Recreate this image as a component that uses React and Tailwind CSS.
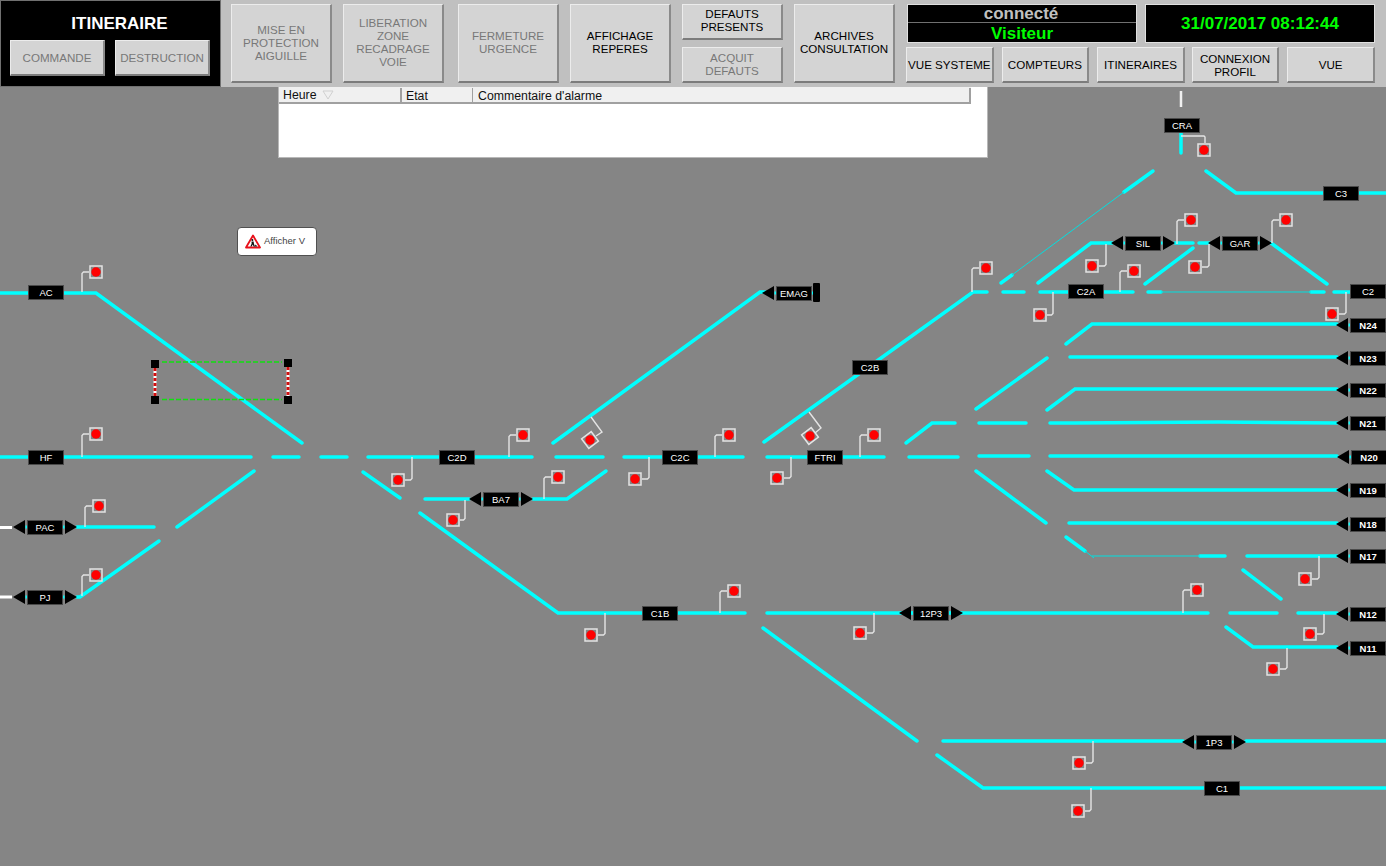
import React from 'react';

const font = { fontFamily: '"Liberation Sans", Arial, sans-serif' };

// track segments in page coordinates
const tracks = [
  '0,293 96,293 302,443',
  '0,457 251,457',
  '273,457 299,457',
  '321,457 347,457',
  '368,457 532,457',
  '556,457 603,457',
  '624,457 743,457',
  '767,457 884,457',
  '909,457 958,457',
  '979,456 1029,456',
  '1050,456 1337,456',
  '177,527 254,471',
  '77,527 154,527',
  '77,597 80,597 159,541',
  '363,472 400,498',
  '420,513 558,613 745,613',
  '767,613 1208,613',
  '1230,613 1277,613',
  '1298,613 1337,613',
  '425,499 469,499',
  '533,499 567,499 606,471',
  '553,443 760,292 765,292',
  '764,442 973,292 987,292',
  '1003,292 1024,292',
  '1040,292 1133,292',
  '1148,292 1161,292',
  '1311,292 1324,292',
  '1334,292 1350,292',
  '1001,283 1012,275',
  '1124,192 1153,171',
  '1206,171 1236,193 1386,193',
  '1181,132 1181,153',
  '1038,283 1091,243 1112,243',
  '1175,243 1193,243',
  '1199,243 1209,243',
  '1271,243 1327,284',
  '1145,284 1193,248',
  '1066,344 1092,324 1337,324',
  '1070,357 1337,357',
  '976,409 1047,358',
  '1047,410 1075,389 1337,389',
  '979,423 1026,423',
  '1050,423 1074,423 1219,422 1337,423',
  '906,443 932,423 955,423',
  '1047,471 1074,490 1337,490',
  '976,471 1046,523',
  '1069,523 1337,523',
  '1066,537 1085,551',
  '1200,556 1225,556',
  '1247,556 1337,556',
  '1243,570 1281,599',
  '1226,627 1253,647 1337,647',
  '763,628 917,741',
  '943,741 1183,741',
  '1246,741 1386,741',
  '937,755 983,788 1386,788',
];

const thinTracks = [
  '1012,275 1124,192',
  '1161,292 1311,292',
  '1085,551 1094,558',
  '1092,556 1200,556',
];

// square centre, stem x, y where the stem meets the track
const alarms = [
  [96, 272, 82, 292],
  [96, 434, 82, 457],
  [99, 506, 85, 527],
  [96, 575, 82, 596],
  [398, 480, 412, 457],
  [523, 435, 509, 457],
  [453, 520, 465, 500],
  [558, 477, 544, 499],
  [635, 479, 649, 457],
  [729, 435, 715, 457],
  [777, 478, 791, 457],
  [874, 435, 860, 457],
  [986, 268, 972, 292],
  [1040, 315, 1053, 292],
  [1134, 271, 1120, 292],
  [1092, 266, 1106, 244],
  [1191, 220, 1177, 244],
  [1195, 267, 1209, 244],
  [1286, 220, 1272, 243],
  [1332, 314, 1346, 292],
  [1305, 579, 1319, 556],
  [1197, 590, 1183, 613],
  [1310, 634, 1324, 614],
  [1273, 669, 1287, 648],
  [591, 635, 605, 613],
  [734, 591, 720, 613],
  [860, 633, 874, 613],
  [1079, 763, 1093, 741],
  [1078, 811, 1091, 788],
];

// x is the left edge of the black body, y its centre
const labels = [
  { name: 'AC', x: 28, y: 292 },
  { name: 'HF', x: 28, y: 457 },
  { name: 'PAC', x: 27, y: 527, left: true, right: true },
  { name: 'PJ', x: 27, y: 597, left: true, right: true },
  { name: 'C2D', x: 439, y: 457 },
  { name: 'BA7', x: 483, y: 499, left: true, right: true },
  { name: 'C2C', x: 662, y: 457 },
  { name: 'FTRI', x: 807, y: 457 },
  { name: 'C2B', x: 852, y: 367 },
  { name: 'EMAG', x: 776, y: 293, left: true },
  { name: 'C1B', x: 642, y: 613 },
  { name: '12P3', x: 913, y: 613, left: true, right: true },
  { name: '1P3', x: 1196, y: 742, left: true, right: true },
  { name: 'C1', x: 1204, y: 788 },
  { name: 'CRA', x: 1164, y: 125 },
  { name: 'C3', x: 1323, y: 193 },
  { name: 'C2A', x: 1068, y: 291 },
  { name: 'C2', x: 1350, y: 291 },
  { name: 'SIL', x: 1125, y: 243, left: true, right: true },
  { name: 'GAR', x: 1222, y: 243, left: true, right: true },
  { name: 'N24', x: 1350, y: 325, left: true, bold: true },
  { name: 'N23', x: 1350, y: 358, left: true, bold: true },
  { name: 'N22', x: 1350, y: 390, left: true, bold: true },
  { name: 'N21', x: 1350, y: 423, left: true, bold: true },
  { name: 'N20', x: 1351, y: 457, left: true, bold: true },
  { name: 'N19', x: 1350, y: 490, left: true, bold: true },
  { name: 'N18', x: 1350, y: 524, left: true, bold: true },
  { name: 'N17', x: 1350, y: 556, left: true, bold: true },
  { name: 'N12', x: 1350, y: 614, left: true, bold: true },
  { name: 'N11', x: 1350, y: 648, left: true, bold: true },
];

const AlarmSquare = ({ cx, cy }) => (
  <>
    <rect x={cx - 6} y={cy - 6} width="12" height="12" fill="#858585" stroke="#e4e4e4" strokeWidth="1.5" />
    <circle cx={cx} cy={cy} r="4.7" fill="#ff0000" />
  </>
);

const Alarm = ({ data }) => {
  const [cx, cy, sx, ty] = data;
  const edge = sx < cx ? cx - 7 : cx + 7;
  const corner = sx < cx ? sx + 1.5 : sx - 1.5;
  const bend = ty > cy ? cy + 1.5 : cy - 1.5;
  return (
    <>
      <path d={`M${sx} ${ty}V${bend}L${corner} ${cy}H${edge}`} fill="none" stroke="#e4e4e4" strokeWidth="1.4" />
      <AlarmSquare cx={cx} cy={cy} />
    </>
  );
};

const Diamond = ({ cx, cy, stem }) => (
  <>
    <polyline points={stem} fill="none" stroke="#e4e4e4" strokeWidth="1.4" />
    <g transform={`rotate(-37 ${cx} ${cy})`}>
      <AlarmSquare cx={cx} cy={cy} />
    </g>
  </>
);

const Arrows = ({ label }) => {
  const { x, y, left, right } = label;
  return (
    <>
      {left && <polygon points={`${x - 14},${y} ${x - 2},${y - 7} ${x - 2},${y + 7}`} fill="#000" />}
      {left && <rect x={x - 1.5} y={y - 1.5} width="1.5" height="3" fill="#00ffff" />}
      {right && <rect x={x + 36} y={y - 1.5} width="1.5" height="3" fill="#00ffff" />}
      {right && <polygon points={`${x + 50},${y} ${x + 38},${y - 7} ${x + 38},${y + 7}`} fill="#000" />}
    </>
  );
};

const TrackLabel = ({ label }) => (
  <div
    className={`absolute flex h-[15px] w-[36px] items-center justify-center border border-[#4a4a4a] bg-black text-[9.5px] leading-none text-white ${label.bold ? 'font-bold' : ''}`}
    style={{ left: label.x, top: label.y - 87 - 7 }}
  >
    {label.name}
  </div>
);

const PanelButton = ({ lines, active, className }) => (
  <div
    className={`flex flex-col items-center justify-center border-t border-l border-t-[#ececec] border-l-[#ececec] border-r-2 border-b-2 border-r-[#8a8a8a] border-b-[#7c7c7c] bg-[#d4d4d4] text-[11.6px] leading-[13px] ${active ? 'text-black' : 'text-[#787878]'} ${className}`}
  >
    {lines.map((line) => (
      <span key={line} className="whitespace-nowrap">{line}</span>
    ))}
  </div>
);

const WarningIcon = () => (
  <svg width="16" height="15" viewBox="0 0 16 15">
    <polygon points="8,1.5 15,13.5 1,13.5" fill="#fff" stroke="#e8101a" strokeWidth="1.8" strokeLinejoin="round" />
    <circle cx="7.4" cy="6" r="1" fill="#111" />
    <path d="M6.5 7.4L8.6 7.6L9 10L10 12.5H8.6L7.8 10.6L6.6 12.5H5.3L6.6 9.8Z" fill="#111" />
    <path d="M9.6 12.5L10.6 10.6L12.4 12.5Z" fill="#111" />
  </svg>
);

const Toolbar = () => (
  <div className="flex h-[87px] shrink-0 bg-[#c0c0c0]">
    <div className="flex h-[87px] w-[221px] shrink-0 flex-col border border-[#707070] bg-black">
      <div className="mt-[13px] h-[20px] pl-[18px] text-center text-[17px] font-bold leading-[20px] text-white">ITINERAIRE</div>
      <div className="mt-[6px] flex gap-[10px] pl-[9px]">
        <PanelButton lines={['COMMANDE']} className="h-[36px] w-[95px]" />
        <PanelButton lines={['DESTRUCTION']} className="h-[36px] w-[95px]" />
      </div>
    </div>
    <div className="flex items-start pt-[4px] pl-[10px]">
      <PanelButton lines={['MISE EN', 'PROTECTION', 'AIGUILLE']} className="h-[79px] w-[101px] pb-[2px]" />
      <PanelButton lines={['LIBERATION', 'ZONE', 'RECADRAGE', 'VOIE']} className="ml-[11px] h-[79px] w-[101px] pb-[2px]" />
      <PanelButton lines={['FERMETURE', 'URGENCE']} className="ml-[14px] h-[79px] w-[101px] pb-[2px]" />
      <PanelButton lines={['AFFICHAGE', 'REPERES']} active className="ml-[11px] h-[79px] w-[101px] pb-[2px]" />
      <div className="ml-[11px] flex w-[101px] flex-col gap-[7px]">
        <PanelButton lines={['DEFAUTS', 'PRESENTS']} active className="h-[36px] pb-[4px]" />
        <PanelButton lines={['ACQUIT', 'DEFAUTS']} className="h-[36px] pb-[2px]" />
      </div>
      <PanelButton lines={['ARCHIVES', 'CONSULTATION']} active className="ml-[11px] h-[79px] w-[101px] pb-[2px]" />
      <div className="ml-[11px] flex w-[469px] flex-col gap-[4px]">
        <div className="flex gap-[8px] pl-[1px]">
          <div className="flex h-[39px] w-[231px] flex-col border border-[#e0e0e0] bg-black text-center text-[17px] font-bold leading-[18px]">
            <div className="h-[18px] border-b border-[#707070] pr-[2px] text-[#c0c0c0]">connecté</div>
            <div className="mt-[2px] text-[#00ff00]">Visiteur</div>
          </div>
          <div className="flex h-[39px] w-[231px] items-center justify-center border border-[#e0e0e0] bg-black text-[17px] font-bold text-[#00ff00]">
            31/07/2017 08:12:44
          </div>
        </div>
        <div className="flex gap-[7px]">
          <PanelButton lines={['VUE SYSTEME']} active className="h-[36px] w-[88px]" />
          <PanelButton lines={['COMPTEURS']} active className="ml-[1px] h-[36px] w-[88px]" />
          <PanelButton lines={['ITINERAIRES']} active className="ml-[1px] h-[36px] w-[88px]" />
          <PanelButton lines={['CONNEXION', 'PROFIL']} active className="h-[36px] w-[88px]" />
          <PanelButton lines={['VUE']} active className="ml-[1px] h-[36px] w-[88px]" />
        </div>
      </div>
    </div>
  </div>
);

const AlarmTable = () => (
  <div className="absolute top-0 left-[278px] flex h-[71px] w-[710px] flex-col border-r border-b border-l border-[#b8b8b8] bg-white text-[12.3px] leading-[16px] text-[#111]">
    <div className="mr-[16px] flex h-[17px] border-b-2 border-[#a0a0a0] bg-[#f0f0f0] pt-[1px]">
      <div className="flex w-[123px] items-center gap-[5px] border-r-2 border-[#a0a0a0] pl-[4px]">
        Heure
        <svg width="12" height="10" viewBox="0 0 12 10">
          <path d="M1 1H11L6 9Z" fill="none" stroke="#d0d0d0" />
        </svg>
      </div>
      <div className="w-[71px] border-r border-[#a0a0a0] pl-[4px]">Etat</div>
      <div className="flex-1 border-r-2 border-[#a0a0a0] pl-[5px]">Commentaire d'alarme</div>
    </div>
  </div>
);

const TrackDiagram = () => (
  <svg className="absolute inset-0" width="1386" height="779" viewBox="0 87 1386 779">
    <line x1="1181" y1="91" x2="1181" y2="107" stroke="#f0f0f0" strokeWidth="2.5" />
    <line x1="0" y1="527.5" x2="12" y2="527.5" stroke="#fff" strokeWidth="3" />
    <line x1="0" y1="597" x2="12" y2="597" stroke="#fff" strokeWidth="3" />
    {tracks.map((points) => (
      <polyline key={points} points={points} fill="none" stroke="#00ffff" strokeWidth="3.5" strokeLinecap="round" />
    ))}
    {thinTracks.map((points) => (
      <polyline key={points} points={points} fill="none" stroke="#00e0e0" strokeWidth="1" />
    ))}

    {/* barrier */}
    <line x1="162" y1="362" x2="282" y2="362" stroke="#10e010" strokeWidth="1.3" strokeDasharray="5 2" />
    <line x1="162" y1="399.5" x2="282" y2="399.5" stroke="#10e010" strokeWidth="1.3" strokeDasharray="5 2" />
    <line x1="155" y1="368" x2="155" y2="396" stroke="#fff" strokeWidth="3" />
    <line x1="155" y1="368" x2="155" y2="396" stroke="#d01010" strokeWidth="3" strokeDasharray="3 2" />
    <line x1="288" y1="367" x2="288" y2="396" stroke="#fff" strokeWidth="3" />
    <line x1="288" y1="367" x2="288" y2="396" stroke="#d01010" strokeWidth="3" strokeDasharray="3 2" />
    <rect x="151" y="360" width="8" height="8" fill="#000" />
    <rect x="151" y="396" width="8" height="8" fill="#000" />
    <rect x="284" y="359" width="8" height="8" fill="#000" />
    <rect x="284" y="396" width="8" height="8" fill="#000" />

    {labels.map((label) => (
      <Arrows key={label.name} label={label} />
    ))}
    <rect x="812" y="291.5" width="2" height="3" fill="#00ffff" />
    <rect x="813" y="283" width="7" height="19" rx="1" fill="#000" />

    {alarms.map((alarm) => (
      <Alarm key={alarm.join('-')} data={alarm} />
    ))}
    <path d="M1181 136H1204L1205 137V143" fill="none" stroke="#e4e4e4" strokeWidth="1.4" />
    <AlarmSquare cx={1204} cy={150} />
    <Diamond cx={590} cy={440} stem="591,417 602,432 596,436" />
    <Diamond cx={810} cy={436} stem="809,412 821,428 815,433" />
  </svg>
);

const App = () => (
  <div className="flex h-[866px] w-full flex-col overflow-hidden bg-[#858585]" style={font}>
    <Toolbar />
    <div className="relative flex-1">
      <TrackDiagram />
      {labels.map((label) => (
        <TrackLabel key={label.name} label={label} />
      ))}
      <AlarmTable />
      <div className="absolute top-[140px] left-[237px] flex h-[29px] w-[80px] items-center gap-[3px] rounded-[4px] border border-[#505050] bg-white pl-[7px] text-[9.5px] text-[#444]">
        <WarningIcon />
        Afficher V
      </div>
    </div>
  </div>
);

export default App;
